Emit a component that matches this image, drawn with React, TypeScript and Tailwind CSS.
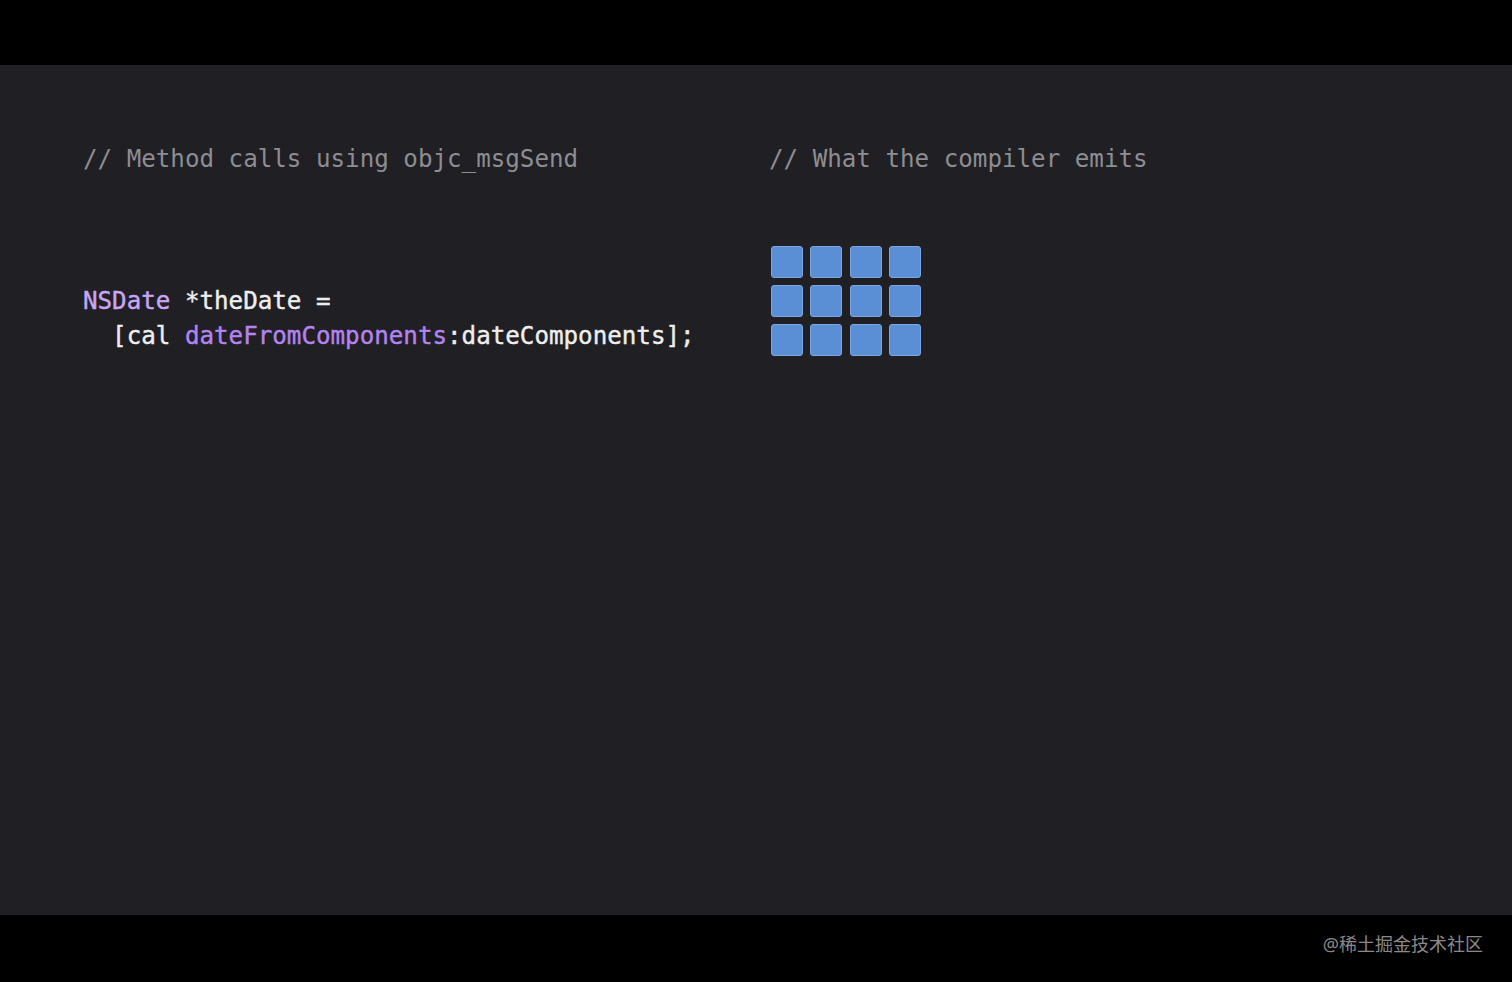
import React from 'react';

const mono = "font-['DejaVu_Sans_Mono','Liberation_Mono',monospace]";

export default function App() {
  return (
    <div className="w-[1512px] h-[982px] bg-black flex flex-col">
      <div className="h-[65px] bg-black" />

      {/* Slide */}
      <div className={`h-[850px] bg-[#1f1f24] flex pl-[83px] pt-[79px] ${mono} text-[24.2px]`}>
        <div className="w-[686px] flex flex-col">
          <p className="leading-[30px] text-[#8d8d93] whitespace-pre">// Method calls using objc_msgSend</p>
          <div className="mt-[110px] leading-[35px] text-[#eeeeee] whitespace-pre [-webkit-text-stroke:0.4px_currentColor]">
            <p>
              <span className="text-[#c8a6f6]">NSDate</span> *theDate =
            </p>
            <p>
              {'  [cal '}
              <span className="text-[#b383ee]">dateFromComponents</span>:dateComponents];
            </p>
          </div>
        </div>

        <div className="flex flex-col">
          <p className="leading-[30px] text-[#8d8d93] whitespace-pre">// What the compiler emits</p>
          <div className="mt-[72px] ml-[2px] grid grid-cols-4 gap-x-[7.3px] gap-y-[7px] w-fit">
            {[...Array(12)].map((_, i) => (
              <div
                key={i}
                className="w-[32px] h-[32px] rounded-[3px] bg-[#5a8fd5] border border-[#7aa6e2]"
              />
            ))}
          </div>
        </div>
      </div>

      <div className="h-[67px] bg-black flex items-center justify-end pr-[29px] pb-[8px]">
        <span className="text-[18px] text-[#8a8a8a] font-['Noto_Sans','Noto_Sans_CJK_SC',sans-serif]">
          @稀土掘金技术社区
        </span>
      </div>
    </div>
  );
}
